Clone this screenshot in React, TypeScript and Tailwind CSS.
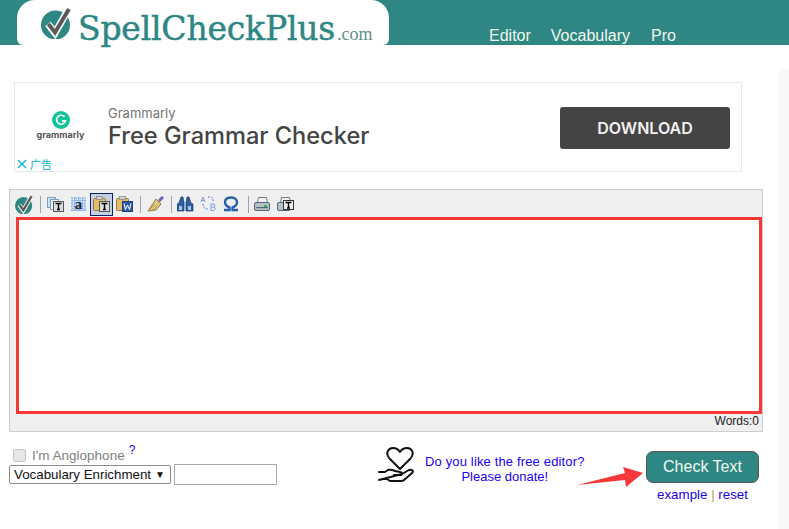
import React from 'react';

const CheckLogo = ({ size }: { size: number }) => (
  <svg width={size} height={size} viewBox="0 0 32 32">
    <circle cx="14.5" cy="18" r="14.5" fill="#2e8783" />
    <path d="M7 17l7 9L27 3" fill="none" stroke="#fff" strokeWidth="7" />
    <path d="M7.5 17l6.5 8.5L28 2" fill="none" stroke="#5a5a5a" strokeWidth="4" />
  </svg>
);

const Doc = ({ x, y, fill }: { x: number; y: number; fill: string }) => (
  <rect x={x} y={y} width="8" height="10" fill={fill} stroke="#7f9cc9" strokeWidth="1" />
);

const TBox = () => (
  <>
    <rect x="6.5" y="5.5" width="10" height="10" fill="#dcdcdc" stroke="#555" />
    <path d="M8.5 7.500h6M11.500 7.500v6M10 13.500h3" stroke="#000" strokeWidth="1.4" fill="none" />
  </>
);

const Clipboard = () => (
  <>
    <rect x="0.500" y="2.500" width="12" height="12" rx="1" fill="#e3bd68" stroke="#8f7a45" />
    <rect x="3.500" y="0.500" width="6" height="3" fill="#d0d0d0" stroke="#777" strokeWidth="0.6" />
  </>
);

const tools: Record<string, React.ReactNode> = {
  copy: (
    <>
      <Doc x={0.5} y={1.5} fill="#cfe0f5" />
      <Doc x={3.5} y={3.5} fill="#eef4fc" />
      <TBox />
    </>
  ),
  plain: (
    <>
      <rect x="1" y="1" width="15" height="14" fill="#8fb4ee" />
      <path d="M1 3h15M1 6h15M1 9h15M1 12h15M3 1v14M7 1v14M11 1v14M14 1v14" stroke="#fff" strokeWidth="1" strokeDasharray="1 1" />
      <text x="8.500" y="12.500" textAnchor="middle" fontSize="15" fontWeight="700" fontFamily="Liberation Serif, serif" fill="#222">a</text>
    </>
  ),
  pasteT: (
    <>
      <Clipboard />
      <TBox />
    </>
  ),
  pasteW: (
    <>
      <Clipboard />
      <rect x="6.500" y="5.500" width="10" height="10" fill="#2d5aa8" stroke="#1d3e78" />
      <path d="M8 7.500l1.500 6 2-4.500 2 4.500 1.500-6" stroke="#fff" fill="none" />
    </>
  ),
  broom: (
    <>
      <path d="M12 5l4-4" stroke="#6f62b5" strokeWidth="3" />
      <path d="M9 3l5 5-5 6-8 1z" fill="#e0c77a" stroke="#8d7b45" />
      <path d="M3 13l5-5M6 14l4-4" stroke="#a99354" />
    </>
  ),
  find: (
    <>
      <path d="M2 7l2-6h2l1 6v8H0V8zM14 7l-2-6h-2L9 7v8h7V8z" fill="#2f5f9e" stroke="#173a6b" strokeWidth="0.7" />
      <rect x="7" y="6" width="2" height="4" fill="#89a9d4" />
      <rect x="2" y="10" width="3" height="4" fill="#a9c4e8" />
      <rect x="11" y="10" width="3" height="4" fill="#a9c4e8" />
    </>
  ),
  replace: (
    <>
      <path d="M3 1l-2 5M3 1l2 5M2 4.500h2" stroke="#7b9ce0" fill="none" />
      <path d="M11 8h3q2 .5 0 3q3 1 0 3.500h-3zM11 11h3" stroke="#7b9ce0" fill="none" />
      <path d="M8 1h2q4 1 3 5M3 8q0 5 5 5" fill="none" stroke="#2f5fc8" strokeDasharray="1.500 1.500" />
    </>
  ),
  omega: (
    <path
      d="M1 14h5.500v-2.500C3.800 10.500 2 8.500 2 6.300 2 3 4.800 1.500 8 1.500S14 3 14 6.300c0 2.200-1.800 4.200-4.500 5.200V14H15"
      fill="none"
      stroke="#2860ad"
      strokeWidth="2.400"
    />
  ),
  print: (
    <>
      <path d="M4.500 1.500h8l1 5h-10z" fill="#f2f2f2" stroke="#6e7b8a" />
      <rect x="0.500" y="6.500" width="15" height="8" rx="1.500" fill="#b6c0cb" stroke="#596675" />
      <rect x="2" y="11" width="12" height="1.200" fill="#596675" />
      <rect x="10" y="9" width="3" height="2" fill="#1bc43f" />
    </>
  ),
  printT: (
    <>
      <path d="M4.500 1.500h8l1 5h-10z" fill="#f2f2f2" stroke="#6e7b8a" />
      <rect x="0.500" y="6.500" width="13" height="8" rx="1.500" fill="#b6c0cb" stroke="#596675" />
      <rect x="6.500" y="4.500" width="10" height="9" fill="#eee" stroke="#333" />
      <path d="M8.500 6.500h6M11.500 6.500v5.500M10 12h3" stroke="#000" strokeWidth="1.400" fill="none" />
    </>
  ),
};

const Tool = ({ name, active }: { name: string; active?: boolean }) => (
  <div
    className={`flex h-[23px] w-[23px] items-center justify-center ${
      active ? 'border border-[#0a246a] bg-[#c5cfe0]' : ''
    }`}
  >
    <svg width="17" height="16" viewBox="0 0 17 16">
      {tools[name]}
    </svg>
  </div>
);

const Sep = ({ className }: { className: string }) => <div className={`h-[17px] w-px bg-[#9aa5b1] ${className}`} />;

const Toolbar = () => (
  <div className="flex h-[27px] items-center bg-[#efefef] pl-[5px] pt-[1px]">
    <CheckLogo size={19} />
    <Sep className="ml-[6px] mr-[3px]" />
    <Tool name="copy" />
    <Tool name="plain" />
    <Tool name="pasteT" active />
    <Tool name="pasteW" />
    <Sep className="ml-[4px] mr-[3px]" />
    <Tool name="broom" />
    <Sep className="ml-[4px] mr-[2px]" />
    <Tool name="find" />
    <Tool name="replace" />
    <Tool name="omega" />
    <Sep className="ml-[5px] mr-[2px]" />
    <Tool name="print" />
    <Tool name="printT" />
  </div>
);

const Ad = () => (
  <div className="relative ml-[14px] mt-[37px] flex h-[90px] w-[728px] items-center border border-[#e6e6e6] bg-white font-['Inter',sans-serif]">
    <div className="flex w-[91px] flex-col items-center pb-[3px]">
      <svg width="18" height="18" viewBox="0 0 20 20">
        <circle cx="10" cy="10" r="10" fill="#15c39a" />
        <path d="M14 6.500A5 5 0 1 0 15 11h-4" fill="none" stroke="#fff" strokeWidth="1.800" />
      </svg>
      <span className="text-[9px] font-bold leading-[12px] text-[#555]">grammarly</span>
    </div>
    <div className="ml-[2px] flex flex-col">
      <span className="text-[13px] leading-[16px] text-[#757575]">Grammarly</span>
      <span className="mt-px text-[23.6px] font-medium leading-[27px] text-[#444]">Free Grammar Checker</span>
    </div>
    <button className="ml-auto mr-[11px] mt-[1px] h-[42px] w-[170px] rounded-[3px] bg-[#444] text-[16px] font-semibold text-[#f2f2f2]">
      DOWNLOAD
    </button>
    <div className="absolute bottom-0 left-[2px] flex items-center gap-[3px] text-[11px] leading-[14px] text-[#00aecd]">
      <svg width="10" height="10" viewBox="0 0 10 10">
        <path d="M1 1l8 8M9 1l-8 8" stroke="#00aecd" strokeWidth="1.200" />
      </svg>
      <span className="font-['Noto_Sans_CJK_SC',sans-serif]">广告</span>
    </div>
  </div>
);

const Editor = () => (
  <div className="ml-[9px] mt-[17px] w-[754px] border border-[#ccc]">
    <Toolbar />
    <div className="flex flex-col bg-[#efefef]">
      <textarea className="ml-[6px] block h-[197px] w-[746px] resize-none border-[3px] border-[#f73838] bg-white outline-none" />
      <div className="h-[17px] pr-[3px] text-right text-[12px] leading-[15px] text-[#222]">Words:0</div>
    </div>
  </div>
);

const Donate = () => (
  <div className="ml-[101px] mt-[13px] flex items-center self-start">
    <svg width="38" height="39" viewBox="0 0 38 39" fill="none" stroke="#111" strokeWidth="2" strokeLinejoin="round" strokeLinecap="round">
      <path d="M22 24L12 14C6.500 8 10.500 3 15 3c3 0 5.500 1.500 7 4 1.500-2.500 4-4 7-4 4.500 0 8.500 5 3 11z" />
      <path d="M1 27h6l3-2c3-1 5 0 7 1l5 1c2 0 3 2 1 3h-7" />
      <path d="M24 29l7-4c3-1 5 1 3 3l-8 7c-1 1-2 1-3 1H12l-3-2H5l-4 1z" />
    </svg>
    <div className="ml-[9px] mt-[8px] text-center text-[13px] leading-[15px] text-[#1a00ee]">
      <div className="tracking-[0.15px]">Do you like the free editor?</div>
      <div>Please donate!</div>
    </div>
  </div>
);

const Bottom = () => (
  <div className="relative flex">
    <div className="ml-[9px] mt-[15px] w-[268px]">
      <div className="flex h-[17px] items-center pl-[4px]">
        <input type="checkbox" disabled className="h-[13px] w-[13px] brightness-90" />
        <span className="ml-[6px] mt-[2px] text-[13.5px] text-[#808080]">I'm Anglophone</span>
        <sup className="ml-[4px] text-[12px] text-[#1a00ee]">?</sup>
      </div>
      <div className="flex items-center">
        <div className="flex h-[19px] w-[162px] items-center justify-between rounded-[2px] border border-[#8c8c8c] pl-[4px] pr-[5px] text-[13.33px] text-[#111]">
          <span>Vocabulary Enrichment</span>
          <span className="text-[10px]">▼</span>
        </div>
        <input className="ml-[3px] h-[21px] w-[103px] border border-[#aaa] bg-white" readOnly />
      </div>
    </div>
    <Donate />
    <svg width="67" height="21" viewBox="0 0 67 21" className="absolute left-[577px] top-[35px]">
      <path d="M0 18L48 6 46 0 66 6 49 20 48 13z" fill="#f73838" />
    </svg>
    <div className="ml-auto mr-[20px] mt-[19px] flex flex-col items-center">
      <button className="h-[32px] w-[113px] rounded-[7px] border border-[#555] bg-[#2e8783] text-[16px] text-[#f0f7ee]">
        Check Text
      </button>
      <div className="mt-[4px] text-[13.33px] leading-[16px] text-[#1a00ee]">
        example <span className="text-[#c09a60]">|</span> reset
      </div>
    </div>
  </div>
);

export default function App() {
  return (
    <div className="flex h-[529px] w-[789px] flex-col overflow-hidden bg-white font-['Liberation_Sans',Arial,sans-serif]">
      <header className="flex h-[45px] shrink-0 items-end bg-[#2e8783]">
        <div className="ml-[17px] flex h-[45px] w-[372px] items-center rounded-b-[6px] rounded-t-[18px] bg-white">
          <div className="ml-[24px]">
            <CheckLogo size={32} />
          </div>
          <span className="ml-[5px] mt-[12px] [font-family:'DejaVu_Serif',serif] text-[33px] leading-[40px] tracking-[-0.2px] text-[#2e8783] [-webkit-text-stroke:0.5px_#2e8783]">
            SpellCheckPlus
          </span>
          <span className="ml-[2px] mt-[22px] font-['Liberation_Serif',serif] text-[18px] leading-[20px] text-[#5f8f8c]">
            .com
          </span>
        </div>
        <nav className="ml-[100px] flex gap-[20px] text-[16px] leading-[18px] text-[#f2f8ee]">
          <a>Editor</a>
          <a>Vocabulary</a>
          <a className="ml-px">Pro</a>
        </nav>
      </header>
      <div className="flex flex-1">
        <main className="w-[779px]">
          <Ad />
          <Editor />
          <Bottom />
        </main>
        <div className="mt-[24px] w-[10px] bg-[#f7f7f7]" />
      </div>
    </div>
  );
}
